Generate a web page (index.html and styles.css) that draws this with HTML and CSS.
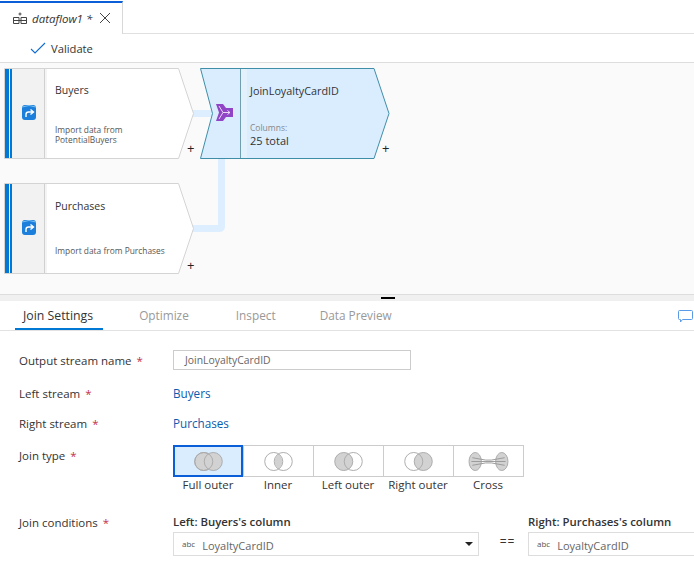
FILE: index.html
```html
<!doctype html>
<html>
<head>
<meta charset="utf-8">
<title>dataflow1</title>
<link rel="stylesheet" href="styles.css">
</head>

<body>
<div class="tabstrip">
	<div class="doc_tab">
		<svg class="doc_icon" width="16" height="14" viewBox="0 0 16 14" fill="none" stroke="#444" stroke-width="1">
			<path d="M1.500 6.500h5.500v6H1.500zM9 6.500h5.500v6H9zM1.500 9.500h5.500M9 9.500h5.500M6.500 3h3M8 1.500v3M7 9.500h2"/>
		</svg>
		<span class="doc_name">dataflow1 *</span>
		<svg class="doc_close" width="12" height="12" viewBox="0 0 12 12" stroke="#444" stroke-width="1"><path d="M1 1l10 10M11 1L1 11"/></svg>
	</div>
</div>
<div class="toolbar">
	<svg width="16" height="12" viewBox="0 0 16 12" fill="none" stroke="#0f6cd0" stroke-width="1.100"><path d="M1 7l4 4L15 1"/></svg>
	<span>Validate</span>
</div>

<div class="canvas">
	<svg class="links" width="694" height="231" viewBox="0 0 694 231" fill="none" stroke="#dceeff" stroke-width="7">
		<path d="M190 50.500h24"/>
		<path d="M190 165.500h29.500a2 2 0 0 0 2-2V90"/>
	</svg>

	<div class="node node_buyers">
		<svg class="node_shape" width="190" height="92" viewBox="0 0 190 92">
			<path d="M.5.500H174.500L189.500 45.500 174.500 90.500H.5z" fill="#fff" stroke="#d4d4d4"/>
			<path d="M8 1h32v89H8z" fill="#f2f2f2"/>
			<path d="M40 1h1v89h-1z" fill="#d0d0d0"/>
			<path d="M41 1h2v89h-2z" fill="#f4f4f4"/>
			<path d="M1 1h4v89H1zM6 1h2v89H6z" fill="#0078d4"/>
		</svg>
		<svg class="node_icon" width="14" height="15" viewBox="0 0 14 15"><rect x="0" y="0" width="14" height="15" rx="3" fill="#1b7fdb"/><path d="M0 2q7-3 14 0" fill="none" stroke="#7cc0f2"/><path d="M4 12V9.500Q4 7 6.500 7H11M8.500 4.500L11.500 7 8.500 9.500" fill="none" stroke="#fff" stroke-width="1.400"/></svg>
		<div class="node_title">Buyers</div>
		<div class="node_note">Import data from<br>PotentialBuyers</div>
		<span class="plus">+</span>
	</div>

	<div class="node node_purchases">
		<svg class="node_shape" width="190" height="92" viewBox="0 0 190 92">
			<path d="M.5.500H174.500L189.500 45.500 174.500 90.500H.5z" fill="#fff" stroke="#d4d4d4"/>
			<path d="M8 1h32v89H8z" fill="#f2f2f2"/>
			<path d="M40 1h1v89h-1z" fill="#d0d0d0"/>
			<path d="M41 1h2v89h-2z" fill="#f4f4f4"/>
			<path d="M1 1h4v89H1zM6 1h2v89H6z" fill="#0078d4"/>
		</svg>
		<svg class="node_icon" width="14" height="15" viewBox="0 0 14 15"><rect x="0" y="0" width="14" height="15" rx="3" fill="#1b7fdb"/><path d="M0 2q7-3 14 0" fill="none" stroke="#7cc0f2"/><path d="M4 12V9.500Q4 7 6.500 7H11M8.500 4.500L11.500 7 8.500 9.500" fill="none" stroke="#fff" stroke-width="1.400"/></svg>
		<div class="node_title">Purchases</div>
		<div class="node_note">Import data from Purchases</div>
		<span class="plus">+</span>
	</div>

	<div class="node node_join">
		<svg class="node_shape" width="190" height="92" viewBox="0 0 190 92">
			<path d="M.5.500H174L189 45.500 174 90.500H.5L12.500 45.500z" fill="#d9edff" stroke="#3f8ea8"/>
			<path d="M40 1h1v89h-1z" fill="#6f9fae"/>
			<path d="M41 1h6v89h-6z" fill="#e3f1fd"/>
		</svg>
		<svg class="join_icon" width="17" height="17" viewBox="0 0 17 17"><path d="M0 0h7l3 4h7v9h-7l-3 4H0l3-8.500z" fill="#8f45c6"/><path d="M3 2l4 6.500h7M3 15l4-6.500M11.500 6.500l2.500 2-2.500 2" fill="none" stroke="#e8d8f5" stroke-width="1"/></svg>
		<div class="node_title">JoinLoyaltyCardID</div>
		<div class="node_cols">Columns:</div>
		<div class="node_total">25 total</div>
		<span class="plus">+</span>
	</div>
</div>

<div class="splitter"><i></i></div>

<div class="panel_tabs">
	<div class="panel_tab on">Join Settings</div>
	<div class="panel_tab">Optimize</div>
	<div class="panel_tab">Inspect</div>
	<div class="panel_tab">Data Preview</div>
	<svg class="chat" width="15" height="13" viewBox="0 0 15 13" fill="none" stroke="#5a9be8"><path d="M1.500.500h12a1 1 0 0 1 1 1v7a1 1 0 0 1-1 1H4.500L2.500 12V9.500h-1a1 1 0 0 1-1-1v-7a1 1 0 0 1 1-1z"/></svg>
</div>

<div class="form">
	<div class="row row_output">
		<div class="label">Output stream name <b>*</b></div>
		<div class="text_input">JoinLoyaltyCardID</div>
	</div>
	<div class="row row_link">
		<div class="label">Left stream <b>*</b></div>
		<a class="link">Buyers</a>
	</div>
	<div class="row row_link">
		<div class="label">Right stream <b>*</b></div>
		<a class="link">Purchases</a>
	</div>
	<div class="row row_join">
		<div class="label">Join type <b>*</b></div>
		<div class="join_types">
			<div class="join_type on">
				<div class="join_box"><svg width="29" height="19" viewBox="0 0 30 20"><circle cx="10" cy="10" r="9.500" fill="#d2d2d2" stroke="#aaa"/><circle cx="20" cy="10" r="9.500" fill="#d2d2d2" stroke="#aaa"/><circle cx="10" cy="10" r="9.500" fill="none" stroke="#aaa"/></svg></div>
				<span>Full outer</span>
			</div>
			<div class="join_type">
				<div class="join_box"><svg width="29" height="19" viewBox="0 0 30 20"><path d="M15 2.300a9.500 9.500 0 0 1 0 15.400a9.500 9.500 0 0 1 0-15.400z" fill="#d2d2d2"/><circle cx="10" cy="10" r="9.500" fill="none" stroke="#aaa"/><circle cx="20" cy="10" r="9.500" fill="none" stroke="#aaa"/></svg></div>
				<span>Inner</span>
			</div>
			<div class="join_type">
				<div class="join_box"><svg width="29" height="19" viewBox="0 0 30 20"><circle cx="10" cy="10" r="9.500" fill="#d2d2d2"/><circle cx="10" cy="10" r="9.500" fill="none" stroke="#aaa"/><circle cx="20" cy="10" r="9.500" fill="none" stroke="#aaa"/></svg></div>
				<span>Left outer</span>
			</div>
			<div class="join_type">
				<div class="join_box"><svg width="29" height="19" viewBox="0 0 30 20"><circle cx="20" cy="10" r="9.500" fill="#d2d2d2"/><circle cx="10" cy="10" r="9.500" fill="none" stroke="#aaa"/><circle cx="20" cy="10" r="9.500" fill="none" stroke="#aaa"/></svg></div>
				<span>Right outer</span>
			</div>
			<div class="join_type">
				<div class="join_box"><svg width="41" height="19" viewBox="0 0 42 20"><ellipse cx="7" cy="10" rx="6.500" ry="9.500" fill="#d2d2d2" stroke="#aaa"/><ellipse cx="35" cy="10" rx="6.500" ry="9.500" fill="#d2d2d2" stroke="#aaa"/><path d="M4 6l14 2.500h6L38 6M3 10h36M4 14l14-2.500h6L38 14" fill="none" stroke="#999"/></svg></div>
				<span>Cross</span>
			</div>
		</div>
	</div>
	<div class="row row_cond">
		<div class="label">Join conditions <b>*</b></div>
		<div class="cond">
			<div class="cond_head">Left: Buyers's column</div>
			<div class="select select_left"><em>abc</em>LoyaltyCardID<i></i></div>
		</div>
		<div class="equals">==</div>
		<div class="cond">
			<div class="cond_head">Right: Purchases's column</div>
			<div class="select select_right"><em>abc</em>LoyaltyCardID</div>
		</div>
	</div>
</div>
</body>
</html>
```

FILE: styles.css
```css
html, body {margin: 0; padding: 0;}
body {width: 694px; height: 576px; overflow: hidden; background: #fff; color: #333; font: 11.500px "Open Sans", "Noto Sans", sans-serif;}

.tabstrip {height: 32px; padding-top: 1px; border-bottom: 1px solid #e0e0e0;}
.doc_tab {display: flex; align-items: center; box-sizing: border-box; width: 123px; height: 33px; padding: 0 0 1px 12px; background: #fff; border-top: 2px solid #0a5fd8; border-right: 1px solid #d8d8d8; position: relative;}
.doc_icon {margin-right: 4px;}
.doc_name {font-style: italic; font-size: 11.500px; color: #333; white-space: nowrap;}
.doc_close {margin-left: 7px;}

.toolbar {display: flex; align-items: center; height: 28px; padding-left: 30px; gap: 5px; border-bottom: 1px solid #ddd; font-size: 11.200px;}

.canvas {position: relative; height: 231px; background: #fafafa; border-bottom: 1px solid #ddd; overflow: hidden;}
.links {position: absolute; left: 0; top: 0;}
.node {position: absolute; width: 190px; height: 92px;}
.node_buyers {left: 4px; top: 5px;}
.node_purchases {left: 4px; top: 120px;}
.node_join {left: 200px; top: 5px;}
.node_shape {position: absolute; left: 0; top: 0;}
.node_icon {position: absolute; left: 18px; top: 37px;}
.join_icon {position: absolute; left: 16px; top: 36px;}
.node_title {position: absolute; left: 51px; top: 15px; font-size: 10.500px; white-space: nowrap; color: #333;}
.node_purchases .node_title {top: 16px;}
.node_join .node_title {left: 50px; font-size: 10.800px;}
.node_note {position: absolute; left: 51px; top: 57px; font-size: 8.400px; line-height: 10px; color: #555; white-space: nowrap;}
.node_purchases .node_note {top: 63px;}
.node_cols {position: absolute; left: 50px; top: 54px; font-size: 8.500px; color: #888;}
.node_total {position: absolute; left: 50px; top: 65px; font-size: 11px; color: #333;}
.plus {position: absolute; left: 183px; top: 73px; font-size: 13px; line-height: 15px; color: #222;}
.node_purchases .plus {top: 75px;}
.node_join .plus {left: 182px;}

.splitter {display: flex; justify-content: center; height: 6px; background: #f0f0f0;}
.splitter i {display: block; width: 14px; height: 2px; margin: 2px 0 0 82px; background: #000;}

.panel_tabs {display: flex; height: 29px; padding-left: 15px; border-bottom: 1px solid #e2e2e2; position: relative;}
.panel_tab {box-sizing: border-box; height: 29px; padding: 6px 8px 0; margin-right: 29px; color: #999; font-size: 11.800px; white-space: nowrap;}
.panel_tab.on {padding-right: 10px; margin-right: 28px; color: #333; font-size: 12.300px; border-bottom: 2px solid #0078d4;}
.panel_tab:nth-child(2) {margin-right: 31px;}
.panel_tab:nth-child(3) {margin-right: 28px;}
.chat {position: absolute; right: 1px; top: 9px;}

.row {display: flex; padding-left: 19px;}
.label {width: 154px; flex: none; line-height: 17px; color: #333; white-space: nowrap;}
.label b {font-weight: normal; color: #c4314b; margin-left: 2px;}
.row_output {align-items: center; padding-top: 19px; height: 20px;}
.text_input {box-sizing: border-box; width: 238px; height: 20px; padding: 0 11px; line-height: 18px; border: 1px solid #ccc; font-size: 10.400px; color: #666;}
.row_link {height: 30px; align-items: center;}
.row_link:nth-child(2) {margin-top: 8px;}
.link {color: #0b5cad; font-size: 11.700px;}
.row_join {margin-top: 7px;}
.row_join .label {padding-top: 2px;}
.join_types {display: flex;}
.join_type {display: flex; flex-direction: column; align-items: center; width: 70px;}
.join_type span {font-size: 11.500px; white-space: nowrap;}
.join_box {box-sizing: border-box; display: flex; align-items: center; justify-content: center; width: 71px; height: 32px; margin-right: -1px; border: 1px solid #ccc;}
.join_type.on .join_box {width: 70px; margin-right: 0; border: 2px solid #0a5fd8; background: #d9edff;}
.row_cond {margin-top: 21px;}
.row_cond .label {padding-top: 1px;}
.cond {flex: none;}
.cond_head {font-weight: 600; font-size: 11.400px; line-height: 17px; margin-bottom: 2px; white-space: nowrap;}
.select {position: relative; box-sizing: border-box; height: 24px; line-height: 22px; padding-left: 8px; border: 1px solid #ddd; font-size: 11px; color: #666; white-space: nowrap;}
.select em {font-style: normal; font-size: 8px; color: #555; vertical-align: 3px; margin-right: 7px;}
.select_left {width: 306px;}
.select_right {width: 180px;}
.select i {position: absolute; right: 5px; top: 9px; border: 4px solid transparent; border-top-color: #222; border-bottom: 0;}
.equals {box-sizing: border-box; width: 49px; flex: none; padding: 20px 0 0 8px; text-align: center; font-size: 12px; letter-spacing: 1px;}
```
